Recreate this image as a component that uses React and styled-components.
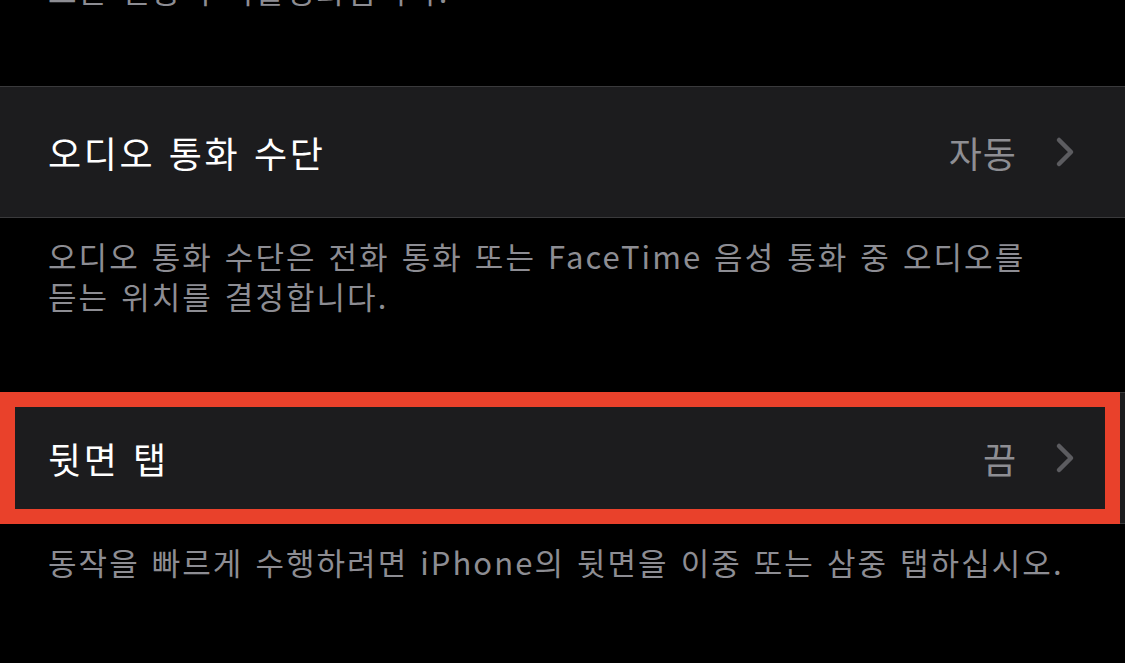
import React from 'react';
import styled, { createGlobalStyle } from 'styled-components';

const GlobalStyle = createGlobalStyle`
  html, body {
    margin: 0;
    padding: 0;
    background: #000;
    overflow: hidden;
  }
  body {
    font-family: "Noto Sans CJK KR", "Noto Sans", sans-serif;
  }
`;

const Screen = styled.div`
  width: 1125px;
  height: 663px;
  overflow: hidden;
  background: #000;
`;

const List = styled.div`
  display: flex;
  flex-direction: column;
  margin-top: -88px;
`;

const Footer = styled.div`
  padding: 18px 48px 76px;
  color: #8d8d93;
  font-size: 31px;
  line-height: 40px;
  letter-spacing: 2.05px;
  word-spacing: 3px;
  white-space: nowrap;
`;

const Row = styled.div`
  position: relative;
  height: 130px;
  display: flex;
  align-items: center;
  padding: 0 50px 0 48px;
  background: #1c1c1e;
  border-top: 1px solid #3a3a3c;
  border-bottom: 1px solid #3a3a3c;
`;

const Title = styled.span`
  flex: 1;
  color: #fff;
  font-size: 36px;
  letter-spacing: 2.6px;
  word-spacing: 3px;
`;

const Value = styled.span`
  color: #8e8e93;
  font-size: 36px;
  letter-spacing: 1px;
  margin-right: 38px;
`;

const Highlight = styled.div`
  position: absolute;
  top: -1px;
  left: 0;
  right: 5px;
  bottom: -1px;
  border: 15px solid #e9412b;
  pointer-events: none;
`;

const Chevron = () => (
  <svg width="20" height="32" viewBox="0 0 20 32">
    <polyline
      points="4,4 16,16 4,28"
      fill="none"
      stroke="#5c5c60"
      strokeWidth="4.5"
      strokeLinecap="round"
      strokeLinejoin="round"
    />
  </svg>
);

const SettingRow = ({ title, value, highlighted }) => (
  <Row>
    <Title>{title}</Title>
    <Value>{value}</Value>
    <Chevron />
    {highlighted && <Highlight />}
  </Row>
);

const App = () => (
  <>
    <GlobalStyle />
    <Screen>
      <List>
        <Footer>
          진동을 끄면 긴급 경보, 재난 경보를 포함한 iPhone의
          <br />
          모든 진동이 비활성화됩니다.
        </Footer>
        <SettingRow title="오디오 통화 수단" value="자동" />
        <Footer>
          오디오 통화 수단은 전화 통화 또는 FaceTime 음성 통화 중 오디오를
          <br />
          듣는 위치를 결정합니다.
        </Footer>
        <SettingRow title="뒷면 탭" value="끔" highlighted />
        <Footer>
          동작을 빠르게 수행하려면 iPhone의 뒷면을 이중 또는 삼중 탭하십시오.
        </Footer>
      </List>
    </Screen>
  </>
);

export default App;
